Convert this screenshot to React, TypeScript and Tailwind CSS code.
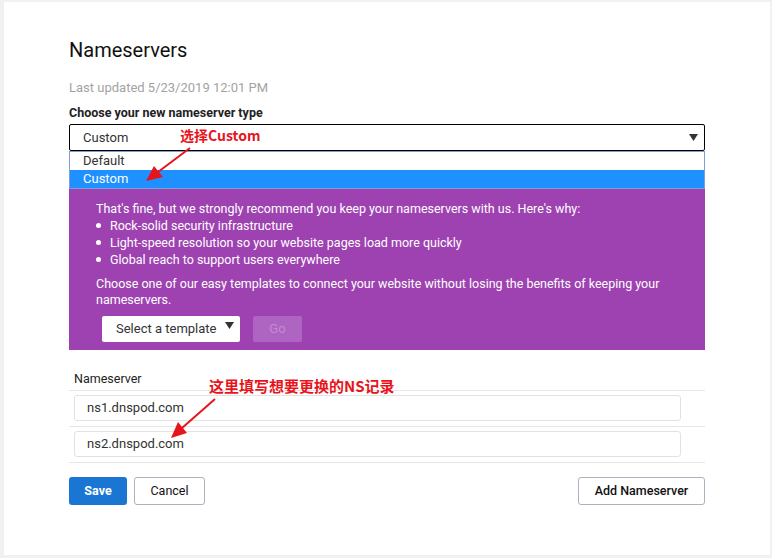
import React from 'react';

function Caret({ className }: { className?: string }) {
  return (
    <svg className={className} width="9" height="7" viewBox="0 0 9 7">
      <path d="M0 0 H9 L4.5 7 Z" fill="#333" />
    </svg>
  );
}

export default function App() {
  const servers = ['ns1.dnspod.com', 'ns2.dnspod.com'];

  return (
    <div className="relative w-[772px] h-[558px] bg-[#f0f1f2] pt-[2px] pl-[4px] pr-[2px] pb-[3px] font-['Roboto','Liberation_Sans',sans-serif] text-[#111]">
      <div className="h-full bg-white pl-[65px] pr-[65px] pt-[36px]">
        <h1 className="text-[20px] leading-[24px] text-[#111]">Nameservers</h1>
        <p className="mt-[18px] text-[13px] leading-[16px] text-[#a3a3a3]">Last updated 5/23/2019 12:01 PM</p>
        <p className="mt-[9px] text-[12.5px] leading-[16px] font-bold text-[#222]">Choose your new nameserver type</p>

        <div className="relative mt-[3px]">
          <div className="flex items-center justify-between h-[27px] border border-black rounded-[2px] pl-[13px] pr-[6px] text-[13px] text-[#333]">
            <span>Custom</span>
            <Caret />
          </div>
          <div className="absolute left-0 right-0 top-full z-10 border border-[#7f9ed6] bg-white text-[13px]">
            <div className="h-[18px] leading-[18px] pl-[13px] text-[#333]">Default</div>
            <div className="h-[18px] leading-[18px] pl-[13px] bg-[#1e90ff] text-white">Custom</div>
          </div>
        </div>

        <div className="bg-[#9e42b2] text-white text-[12.5px] pl-[27px] pr-[20px] pt-[22px] pb-[8px]">
          <p className="leading-[17px]">So you&apos;ve got other plans for your nameservers? Okay, we get it — not a problem.</p>
          <p className="mt-[10px] leading-[17px]">That&apos;s fine, but we strongly recommend you keep your nameservers with us. Here&apos;s why:</p>
          <ul className="leading-[17px]">
            <li className="flex items-center gap-[9px]"><span className="w-[5px] h-[5px] rounded-full bg-white" />Rock-solid security infrastructure</li>
            <li className="flex items-center gap-[9px]"><span className="w-[5px] h-[5px] rounded-full bg-white" />Light-speed resolution so your website pages load more quickly</li>
            <li className="flex items-center gap-[9px]"><span className="w-[5px] h-[5px] rounded-full bg-white" />Global reach to support users everywhere</li>
          </ul>
          <p className="mt-[8px] leading-[16px] pr-[20px]">Choose one of our easy templates to connect your website without losing the benefits of keeping your nameservers.</p>
          <div className="flex items-center gap-[13px] mt-[8px] ml-[6px]">
            <div className="relative flex items-center w-[138px] h-[26px] bg-white rounded-[2px] pl-[14px] text-[13px] text-[#333]">
              Select a template
              <Caret className="absolute right-[6px] top-[6px]" />
            </div>
            <div className="flex items-center justify-center w-[49px] h-[26px] rounded-[2px] bg-[#ad65c1] text-[13px] text-[#c48ad3]">Go</div>
          </div>
        </div>

        <p className="mt-[21px] pl-[5px] text-[12.5px] leading-[16px] text-[#222]">Nameserver</p>
        <div className="mt-[3px] border-t border-[#e6e6e6]">
          {servers.map((s) => (
            <div key={s} className="pl-[5px] pr-[24px] pt-[4px] pb-[5px] border-b border-[#e6e6e6]">
              <div className="flex items-center h-[26px] border border-[#e2e2e2] rounded-[3px] pl-[12px] text-[13px] text-[#333]">{s}</div>
            </div>
          ))}
        </div>

        <div className="flex items-center mt-[14px]">
          <button className="w-[58px] h-[28px] rounded-[3px] bg-[#1b76d3] text-white text-[12.5px] font-bold">Save</button>
          <button className="ml-[7px] w-[71px] h-[28px] rounded-[3px] border border-[#a9b2bd] bg-white text-[12.5px] text-[#111]">Cancel</button>
          <button className="ml-auto w-[127px] h-[28px] rounded-[3px] border border-[#a9b2bd] bg-white text-[12.5px] font-medium text-[#111]">Add Nameserver</button>
        </div>
      </div>

      {/* red annotations */}
      <span className="absolute left-[180px] top-[126px] z-20 text-[14px] leading-[18px] font-bold text-[#e8141c] font-['Noto_Sans_CJK_SC',sans-serif]">选择Custom</span>
      <span className="absolute left-[209px] top-[376px] z-20 text-[15px] leading-[19px] font-bold text-[#e8141c] font-['Noto_Sans_CJK_SC',sans-serif]">这里填写想要更换的NS记录</span>
      <svg className="absolute left-0 top-0 z-20 pointer-events-none" width="772" height="558">
        <line x1="190" y1="148" x2="158" y2="172" stroke="#e8141c" strokeWidth="2" />
        <path d="M146 181 L154 166 L163 177 Z" fill="#e8141c" />
        <line x1="215" y1="399" x2="182" y2="428" stroke="#e8141c" strokeWidth="2" />
        <path d="M171 438 L178 422 L187 433 Z" fill="#e8141c" />
      </svg>
    </div>
  );
}
